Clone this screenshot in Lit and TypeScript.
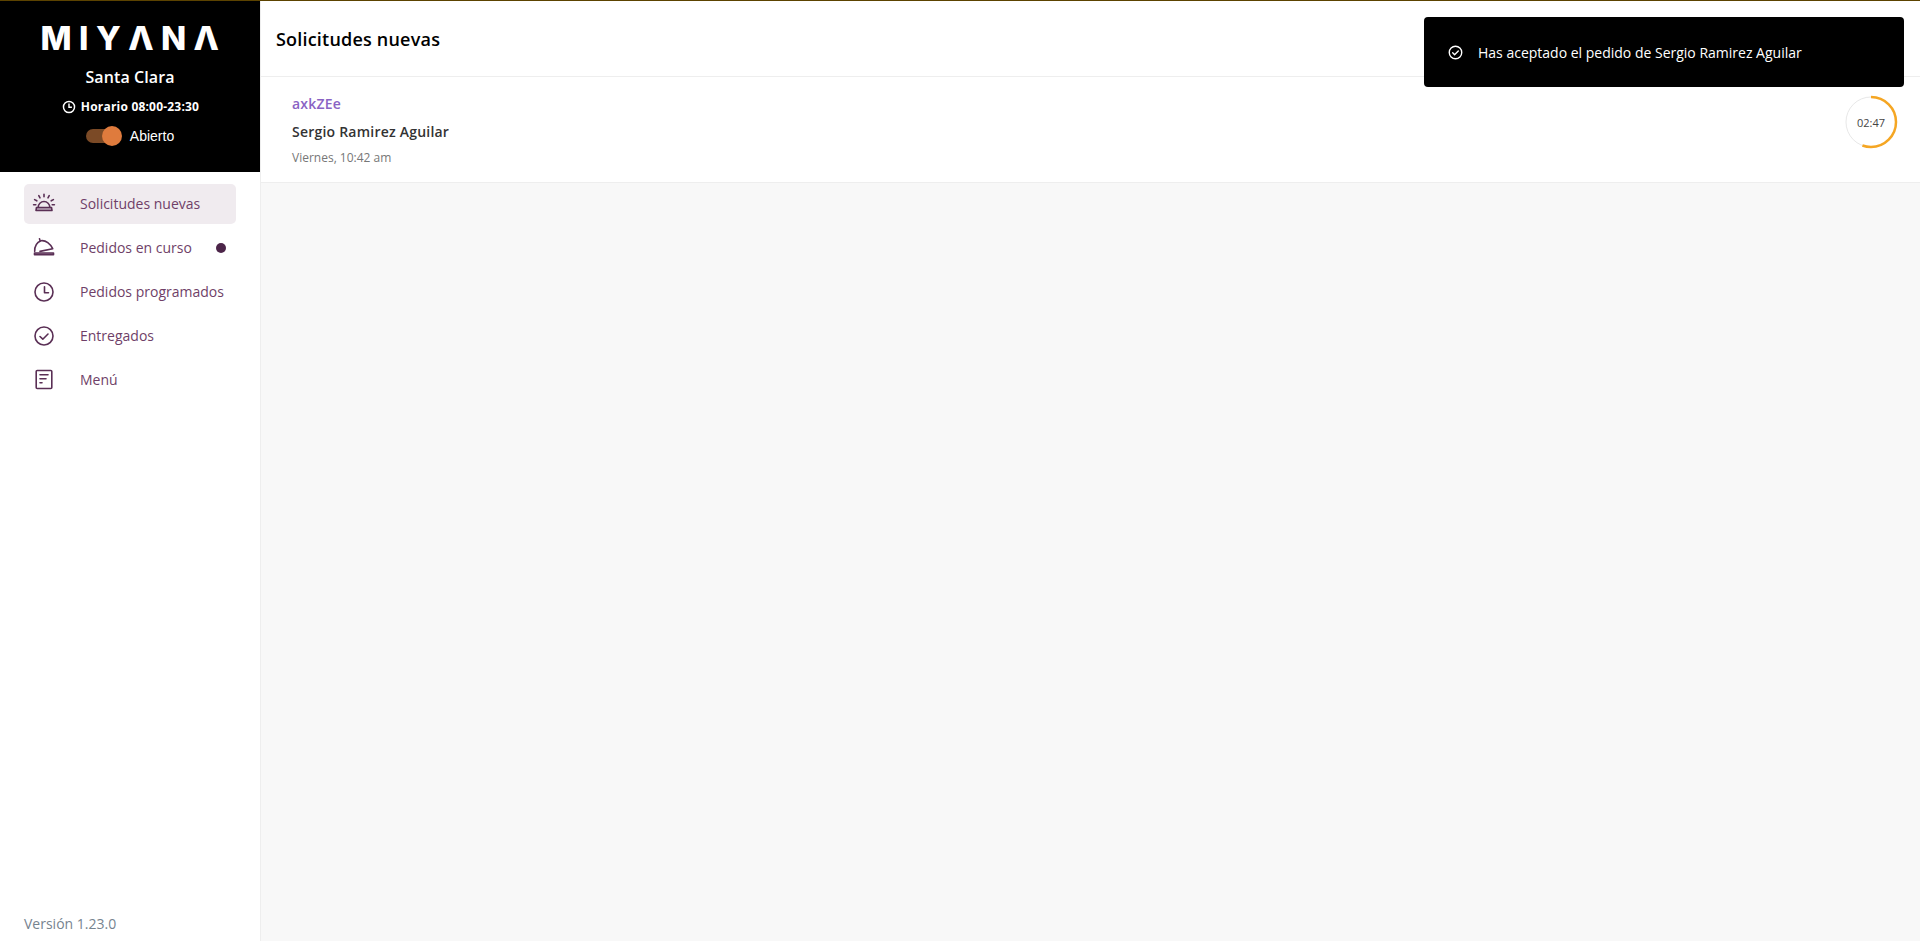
import { LitElement, html, css, svg } from "lit";
import { customElement } from "lit/decorators.js";

const navIcons = {
  bell: svg`<path d="M6.200 15.300a5.800 5.800 0 0 1 11.600 0"/><path d="M4.500 15.500h15l.5 3h-16z" fill="currentColor" fill-opacity=".35"/><path d="M12 2.200v2.600M6.800 3.600l1.200 2.200M17.200 3.600 16 5.800M2.600 7.600l2.200 1.200M21.400 7.600l-2.200 1.200M1.600 12.800h2.200M20.200 12.800h2.200"/>`,
  cloche: svg`<path d="M2.700 15.400c-.2-4.800 2.200-9 6.300-10.700 4.800-.7 9.400 3.200 11.700 8L8 15.400"/><path d="M8 4.600 7.500 2.800"/><path d="M2.500 17h19v1.700h-19z" fill="currentColor" fill-opacity=".5"/>`,
  clock: svg`<circle cx="12" cy="12" r="9"/><path d="M12.500 6.800V12.800h4"/>`,
  check: svg`<circle cx="12" cy="12" r="9"/><path d="m8 12.500 2.800 2.700 5.200-5.200"/>`,
  menu: svg`<rect x="4.200" y="2.500" width="15.600" height="18" rx="1"/><path d="M8 6.800h8M8 10.800h6M8 14.800h2"/>`,
};

const items: { label: string; icon: keyof typeof navIcons; active?: boolean; dot?: boolean }[] = [
  { label: "Solicitudes nuevas", icon: "bell", active: true },
  { label: "Pedidos en curso", icon: "cloche", dot: true },
  { label: "Pedidos programados", icon: "clock" },
  { label: "Entregados", icon: "check" },
  { label: "Menú", icon: "menu" },
];

@customElement("app-root")
export class AppRoot extends LitElement {
  static styles = css`
    :host {
      display: block;
      height: 941px;
      overflow: hidden;
      position: relative;
      box-sizing: border-box;
      border-top: 1px solid #5c4300;
      background: #f8f8f8;
      font-family: "Open Sans", sans-serif;
    }
    .shell { display: flex; height: 940px; }
    .side {
      width: 260px;
      flex: none;
      display: flex;
      flex-direction: column;
      background: #fff;
    }
    .brand {
      height: 171px;
      background: #000;
      color: #fff;
      display: flex;
      flex-direction: column;
      align-items: center;
      flex: none;
    }
    .logo {
      font-family: "Inter", sans-serif;
      font-weight: 800;
      font-size: 33px;
      line-height: 26px;
      letter-spacing: 7.400px;
      margin: 24px 0 0 7px;
      height: 26px;
    }
    .store { font-size: 16px; font-weight: 600; letter-spacing: .1px; line-height: 22px; margin-top: 15px; }
    .hours {
      display: flex;
      align-items: center;
      gap: 5px;
      font-size: 12px;
      font-weight: 700;
      letter-spacing: .2px;
      line-height: 16px;
      margin: 11px 0 0 1px;
    }
    .hours svg { width: 14px; height: 14px; fill: none; stroke: #fff; stroke-width: 2.500; }
    .state {
      display: flex;
      align-items: center;
      gap: 9px;
      margin: 10px 0 0 0;
      height: 22px;
      font-family: "Liberation Sans", sans-serif;
      font-size: 14px;
    }
    .switch { position: relative; width: 35px; height: 14px; border-radius: 7px; background: #7b4a26; }
    .thumb {
      position: absolute;
      right: -1px;
      top: -3px;
      width: 20px;
      height: 20px;
      border-radius: 50%;
      background: #df7b3d;
    }
    nav { display: flex; flex-direction: column; gap: 4px; padding: 12px 24px 0; flex: 1; }
    .item {
      display: flex;
      align-items: center;
      height: 40px;
      border-radius: 5px;
      color: #6f3f68;
      font-size: 14px;
      position: relative;
    }
    .item.active { background: #f0ebef; }
    .item svg {
      width: 24px;
      height: 24px;
      margin: 0 24px 0 8px;
      flex: none;
      fill: none;
      color: #5a2f55;
      stroke: #5a2f55;
      stroke-width: 1.600;
      stroke-linecap: round;
      stroke-linejoin: round;
    }
    .label { margin-top: -2px; }
    .dot {
      position: absolute;
      right: 10px;
      top: 15px;
      width: 10px;
      height: 10px;
      border-radius: 50%;
      background: #4c2549;
    }
    .version { padding: 0 24px 8px; font-size: 14px; line-height: 19px; color: #76838f; }
    main { flex: 1; display: flex; flex-direction: column; min-width: 0; border-left: 1px solid #eeeeee; }
    header {
      height: 76px;
      box-sizing: border-box;
      display: flex;
      align-items: center;
      padding-left: 15px;
      background: #fff;
      border-bottom: 1px solid #eeeeee;
    }
    h1 { margin: 0; font-size: 18px; font-weight: 600; letter-spacing: .2px; color: #000; }
    .row {
      height: 106px;
      box-sizing: border-box;
      display: flex;
      align-items: flex-start;
      justify-content: space-between;
      padding: 17px 22px 0 31px;
      background: #fff;
      border-bottom: 1px solid #eeeeee;
    }
    .code { font-size: 14px; font-weight: 600; letter-spacing: .2px; color: #8a63c4; line-height: 19px; }
    .name { font-size: 14px; font-weight: 600; letter-spacing: .22px; color: #333; line-height: 19px; margin-top: 9px; }
    .date { font-size: 12px; color: #777; line-height: 16px; margin-top: 9px; }
    .timer { position: relative; width: 54px; height: 54px; margin-top: 1px; display: grid; place-items: center; font-size: 11px; color: #444; }
    .timer svg { position: absolute; inset: 0; width: 54px; height: 54px; fill: none; }
    .toast {
      position: absolute;
      left: 1424px;
      top: 16px;
      width: 480px;
      height: 70px;
      box-sizing: border-box;
      display: flex;
      align-items: center;
      gap: 15px;
      padding-left: 24px;
      border-radius: 4px;
      background: #000;
      color: #fff;
      font-size: 14px;
    }
    .toast svg { width: 15px; height: 15px; flex: none; fill: none; stroke: #fff; stroke-width: 2.200; stroke-linecap: round; stroke-linejoin: round; }
  `;

  render() {
    return html`
      <div class="shell">
        <aside class="side">
          <div class="brand">
            <div class="logo" aria-label="MIYANA">MIYΛNΛ</div>
            <div class="store">Santa Clara</div>
            <div class="hours">
              <svg viewBox="0 0 24 24"><circle cx="12" cy="12" r="9.500"/><path d="M12 6v6.500h5"/></svg>
              Horario 08:00-23:30
            </div>
            <div class="state"><span class="switch"><span class="thumb"></span></span>Abierto</div>
          </div>
          <nav>
            ${items.map(
              (i) => html`<div class="item ${i.active ? "active" : ""}">
                <svg viewBox="0 0 24 24">${navIcons[i.icon]}</svg><span class="label">${i.label}</span>${i.dot ? html`<span class="dot"></span>` : ""}
              </div>`
            )}
          </nav>
          <div class="version">Versión 1.23.0</div>
        </aside>
        <main>
          <header><h1>Solicitudes nuevas</h1></header>
          <section class="row">
            <div>
              <div class="code">axkZEe</div>
              <div class="name">Sergio Ramirez Aguilar</div>
              <div class="date">Viernes, 10:42 am</div>
            </div>
            <div class="timer">
              <svg viewBox="0 0 54 54">
                <circle cx="27" cy="27" r="25" stroke="#e8e8e8" stroke-width="1"/>
                <circle cx="27" cy="27" r="25" stroke="#f5a623" stroke-width="2.500" pathLength="100" stroke-dasharray="55.600 100" transform="rotate(-90 27 27)"/>
              </svg>
              02:47
            </div>
          </section>
        </main>
      </div>
      <div class="toast">
        <svg viewBox="0 0 24 24"><circle cx="12" cy="12" r="10"/><path d="m7.500 12.500 3 3 6-6"/></svg>
        Has aceptado el pedido de Sergio Ramirez Aguilar
      </div>
    `;
  }
}
